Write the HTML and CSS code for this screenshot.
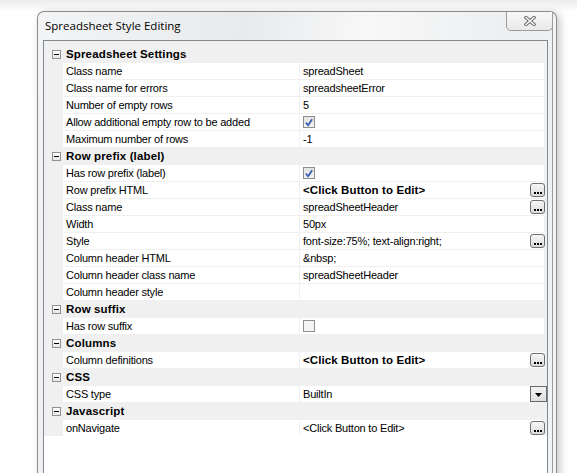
FILE: index.html
```html
<!DOCTYPE html>
<html>
<head>
<meta charset="utf-8">
<title>Spreadsheet Style Editing</title>
<link rel="stylesheet" href="styles.css">
</head>
<body>
<div class="window">
  <div class="titlebar">
    <span class="title">Spreadsheet Style Editing</span>
    <div class="close">
      <svg width="12" height="10" viewBox="0 0 12 10">
        <path d="M2 1.5 L10 8.5 M10 1.5 L2 8.5" stroke="#6a6a6a" stroke-width="3.4" stroke-linecap="square" fill="none"/>
        <path d="M2 1.5 L10 8.5 M10 1.5 L2 8.5" stroke="#ffffff" stroke-width="1.4" stroke-linecap="square" fill="none"/>
      </svg>
    </div>
  </div>
  <div class="grid">
    <div class="rows">
      <div class="cat"><span class="toggle"></span><span class="cat-name">Spreadsheet Settings</span></div>
      <div class="prop"><span class="name">Class name</span><span class="val">spreadSheet</span></div>
      <div class="prop"><span class="name">Class name for errors</span><span class="val">spreadsheetError</span></div>
      <div class="prop"><span class="name">Number of empty rows</span><span class="val">5</span></div>
      <div class="prop"><span class="name">Allow additional empty row to be added</span><span class="val"><span class="check checked"><svg width="11" height="11" viewBox="0 0 11 11"><path d="M2 5.5 L4.5 8.5 L9 2" stroke="#3a5fb0" stroke-width="2" fill="none"/></svg></span></span></div>
      <div class="prop"><span class="name">Maximum number of rows</span><span class="val">-1</span></div>

      <div class="cat"><span class="toggle"></span><span class="cat-name">Row prefix (label)</span></div>
      <div class="prop"><span class="name">Has row prefix (label)</span><span class="val"><span class="check checked"><svg width="11" height="11" viewBox="0 0 11 11"><path d="M2 5.5 L4.5 8.5 L9 2" stroke="#3a5fb0" stroke-width="2" fill="none"/></svg></span></span></div>
      <div class="prop"><span class="name">Row prefix HTML</span><span class="val"><b class="strong">&lt;Click Button to Edit&gt;</b><span class="ellipsis"><i></i><i></i><i></i></span></span></div>
      <div class="prop"><span class="name">Class name</span><span class="val">spreadSheetHeader<span class="ellipsis"><i></i><i></i><i></i></span></span></div>
      <div class="prop"><span class="name">Width</span><span class="val">50px</span></div>
      <div class="prop"><span class="name">Style</span><span class="val">font-size:75%; text-align:right;<span class="ellipsis"><i></i><i></i><i></i></span></span></div>
      <div class="prop"><span class="name">Column header HTML</span><span class="val">&amp;nbsp;</span></div>
      <div class="prop"><span class="name">Column header class name</span><span class="val">spreadSheetHeader</span></div>
      <div class="prop"><span class="name">Column header style</span><span class="val"></span></div>

      <div class="cat"><span class="toggle"></span><span class="cat-name">Row suffix</span></div>
      <div class="prop"><span class="name">Has row suffix</span><span class="val"><span class="check"></span></span></div>

      <div class="cat"><span class="toggle"></span><span class="cat-name">Columns</span></div>
      <div class="prop"><span class="name">Column definitions</span><span class="val"><b class="strong">&lt;Click Button to Edit&gt;</b><span class="ellipsis"><i></i><i></i><i></i></span></span></div>

      <div class="cat"><span class="toggle"></span><span class="cat-name">CSS</span></div>
      <div class="prop"><span class="name">CSS type</span><span class="val">BuiltIn<span class="dropdown"><svg width="7" height="4" viewBox="0 0 7 4"><path d="M0 0 H7 L3.5 4 Z" fill="#000"/></svg></span></span></div>

      <div class="cat"><span class="toggle"></span><span class="cat-name">Javascript</span></div>
      <div class="prop"><span class="name">onNavigate</span><span class="val">&lt;Click Button to Edit&gt;<span class="ellipsis"><i></i><i></i><i></i></span></span></div>
    </div>
  </div>
</div>
</body>
</html>
```

FILE: styles.css
```css
html, body {
  margin: 0;
  padding: 0;
}

body {
  width: 577px;
  height: 473px;
  overflow: hidden;
  background: linear-gradient(180deg, #ececec 0px, #ffffff 12px);
  font-family: "Liberation Sans", Arial, sans-serif;
  color: #000;
}

.window {
  margin: 11px 0 0 37px;
  width: 520px;
  height: 480px;
  box-sizing: border-box;
  border: 1px solid #8a8a8a;
  border-bottom: none;
  border-radius: 7px 7px 0 0;
  padding: 0 8px 0 5px;
  display: flex;
  flex-direction: column;
  background: linear-gradient(100deg, #f3f4f5 0%, #e8eaec 35%, #f8f8f8 55%, #eceef0 80%, #f2f3f4 100%);
  box-shadow: inset -3px 0 0 #f4f4f4, inset -4px 0 0 #9a9a9a, 3px 2px 8px rgba(0, 0, 0, 0.22);
}

.titlebar {
  height: 28px;
  flex: none;
  display: flex;
  justify-content: space-between;
  align-items: flex-start;
}

.title {
  font-family: "Open Sans", "Noto Sans", sans-serif;
  font-size: 11.5px;
  line-height: 28px;
  padding-left: 2px;
  color: #000;
}

.close {
  width: 47px;
  height: 19px;
  box-sizing: border-box;
  margin-right: -5px;
  border: 1px solid #9c9c9c;
  border-top: none;
  border-radius: 0 0 5px 5px;
  background: linear-gradient(180deg, #f8f8f8, #e9e9e9);
  display: flex;
  align-items: center;
  justify-content: center;
}

.grid {
  flex: 1;
  border: 1px solid #828790;
  border-bottom: none;
  background: #fff;
}

.rows {
  background: #f0f0f0;
  padding: 5px 0 0 0;
  display: flex;
  flex-direction: column;
  gap: 1px;
  font-size: 11px;
  letter-spacing: -0.2px;
}

.cat {
  height: 16px;
  display: flex;
  align-items: center;
}

.toggle {
  width: 9px;
  height: 9px;
  box-sizing: border-box;
  margin-left: 8px;
  border: 1px solid #919191;
  background: linear-gradient(180deg, #ffffff, #e6e6e6);
  position: relative;
}

.toggle::after {
  content: "";
  position: absolute;
  left: 1px;
  top: 3px;
  width: 5px;
  height: 1px;
  background: #000;
}

.cat-name {
  margin-left: 5px;
  font-weight: bold;
  font-size: 11.5px;
  letter-spacing: 0.15px;
  line-height: 16px;
}

.prop {
  height: 16px;
  margin-left: 19px;
  display: grid;
  grid-template-columns: 236px 244px;
  column-gap: 1px;
}

.name,
.val {
  background: #fff;
  line-height: 16px;
  white-space: nowrap;
  overflow: visible;
}

.name {
  padding-left: 3px;
}

.val {
  padding-left: 3px;
  display: flex;
  align-items: center;
  justify-content: space-between;
}

.strong {
  font-weight: bold;
  font-size: 11.5px;
  letter-spacing: 0.1px;
}

.check {
  width: 12px;
  height: 12px;
  box-sizing: border-box;
  border: 1px solid #8f8f8f;
  background: #f4f4f4;
  display: flex;
  align-items: center;
  justify-content: center;
}

.check.checked {
  background: linear-gradient(180deg, #e4e4e4, #f2f2f2);
}

.ellipsis {
  width: 15px;
  height: 14px;
  box-sizing: border-box;
  margin-right: -1px;
  border: 1px solid #707070;
  border-radius: 3px;
  background: linear-gradient(180deg, #f6f6f6, #dcdcdc);
  display: flex;
  align-items: flex-end;
  justify-content: center;
  gap: 1px;
  padding-bottom: 2px;
}

.ellipsis i {
  width: 2px;
  height: 2px;
  background: #000;
}

.dropdown {
  width: 17px;
  height: 16px;
  box-sizing: border-box;
  margin-right: -3px;
  border: 1px solid #6a6a6a;
  background: linear-gradient(180deg, #f2f2f2, #dedede);
  display: flex;
  align-items: center;
  justify-content: center;
  padding-top: 2px;
}
```
